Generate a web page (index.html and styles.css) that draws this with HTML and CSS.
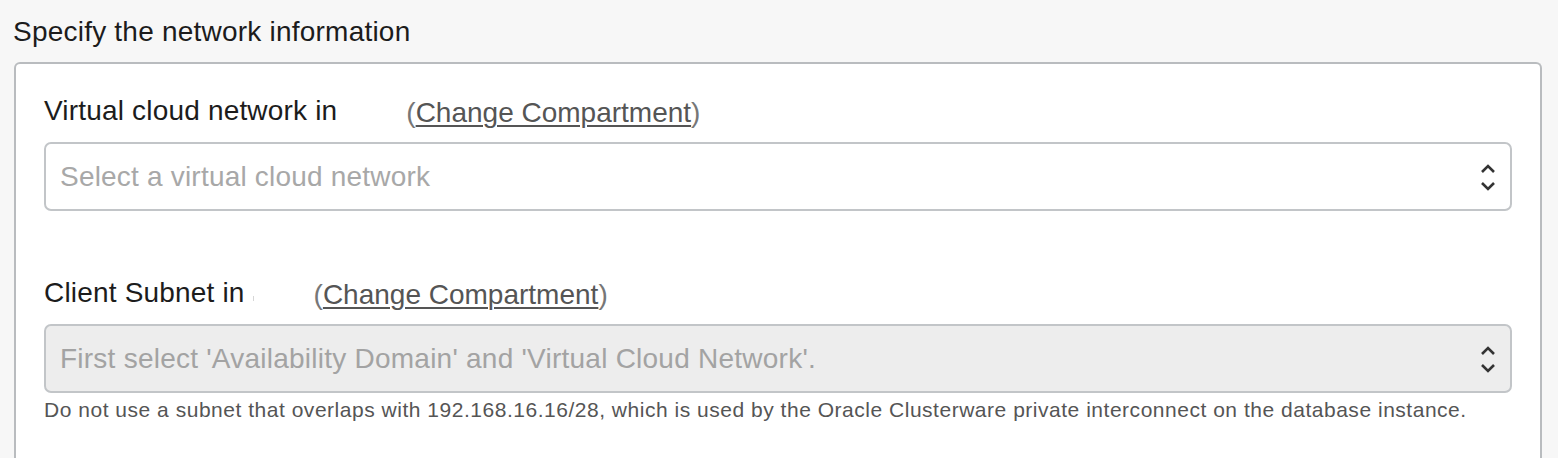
FILE: index.html
```html
<!DOCTYPE html>
<html>
<head>
<meta charset="utf-8">
<link rel="stylesheet" href="styles.css">
</head>
<body>
<div class="page">
  <h2 class="title">Specify the network information</h2>
  <div class="panel">
    <div class="field">
      <div class="label">Virtual cloud network in<span class="comp"></span><span class="change"><span class="paren">(</span><a class="link" href="#">Change Compartment</a><span class="paren">)</span></span></div>
      <div class="select">
        <span class="placeholder">Select a virtual cloud network</span>
        <svg class="chev" width="16" height="30" viewBox="0 0 16 30"><polyline points="2,9 8,3 14,9" fill="none" stroke="#333" stroke-width="2.6"/><polyline points="2,20 8,26 14,20" fill="none" stroke="#333" stroke-width="2.6"/></svg>
      </div>
    </div>
    <div class="field second">
      <div class="label">Client Subnet in<span class="comp"><span class="tick"></span></span><span class="change"><span class="paren">(</span><a class="link" href="#">Change Compartment</a><span class="paren">)</span></span></div>
      <div class="select disabled">
        <span class="placeholder">First select 'Availability Domain' and 'Virtual Cloud Network'.</span>
        <svg class="chev" width="16" height="30" viewBox="0 0 16 30"><polyline points="2,9 8,3 14,9" fill="none" stroke="#333" stroke-width="2.6"/><polyline points="2,20 8,26 14,20" fill="none" stroke="#333" stroke-width="2.6"/></svg>
      </div>
      <div class="help">Do not use a subnet that overlaps with 192.168.16.16/28, which is used by the Oracle Clusterware private interconnect on the database instance.</div>
    </div>
  </div>
</div>
</body>
</html>
```
FILE: styles.css
```css
html, body {
  margin: 0;
  padding: 0;
  background: #f7f7f7;
  height: 100%;
  overflow: hidden;
}
body {
  font-family: "Liberation Sans", Arial, Helvetica, sans-serif;
  color: #1c1c1c;
}
.page {
  padding: 16px 16px 0 13px;
}
.title {
  margin: 0;
  font-size: 28px;
  line-height: 32px;
  font-weight: normal;
  letter-spacing: 0.22px;
  color: #1c1c1c;
}
.panel {
  margin: 14px 0 0 1px;
  width: 1468px;
  background: #fff;
  border: 2px solid #b9bcbf;
  border-bottom: none;
  border-radius: 6px 6px 0 0;
  padding: 31px 28px 50px 28px;
}
.label {
  font-size: 28px;
  line-height: 32px;
  letter-spacing: 0.18px;
  color: #1c1c1c;
  display: flex;
  align-items: baseline;
}
.comp {
  display: inline-block;
  width: 69px;
}
.tick {
  display: inline-block;
  width: 1px;
  height: 5px;
  margin-left: 8px;
  background: #d6d6d6;
  vertical-align: 1px;
}
.change {
  color: #555;
  letter-spacing: 0;
  transform: translateY(2px);
}
.paren {
  color: #777;
}
.link {
  color: #555;
  text-decoration: underline;
  text-decoration-thickness: 1.5px;
  text-underline-offset: 3px;
}
.select {
  margin-top: 15px;
  height: 69px;
  box-sizing: border-box;
  border: 2px solid #c2c5c8;
  border-radius: 7px;
  display: flex;
  align-items: center;
  justify-content: space-between;
  padding: 0 14px 0 14px;
  background: #fff;
}
.select.disabled {
  background: #ededed;
  border-color: #c2c5c8;
}
.placeholder {
  font-size: 28px;
  line-height: 32px;
  letter-spacing: 0.2px;
  color: #a8a8a8;
}
.disabled .placeholder {
  color: #a3a3a3;
  letter-spacing: 0.24px;
}
.chev {
  display: block;
  margin-top: 2px;
}
.second {
  margin-top: 66px;
}
.help {
  margin-top: 5px;
  font-size: 21px;
  line-height: 24px;
  letter-spacing: 0.52px;
  color: #555;
}
```
